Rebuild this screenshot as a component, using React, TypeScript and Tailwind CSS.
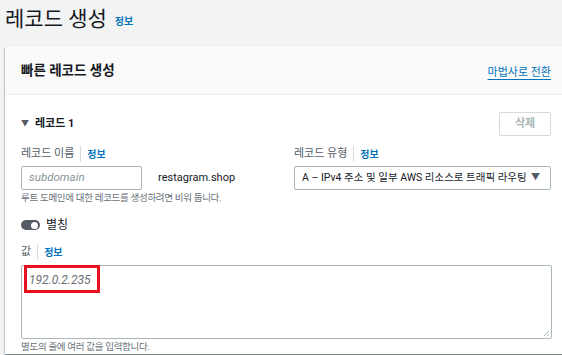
import React from 'react';

const font = { fontFamily: 'Roboto, "Noto Sans CJK KR", sans-serif' };

const Info = () => <span className="text-[10px] font-bold text-[#0073bb]">정보</span>;

const Label = ({ text }: { text: string }) => (
  <div className="flex h-[14px] items-center">
    <span className="text-[11px] leading-[14px] text-[#545b64]">{text}</span>
    <span className="mx-[6px] h-[16px] w-px bg-[#d5dbdb]" />
    <Info />
  </div>
);

const App = () => {
  return (
    <div className="h-[355px] w-[562px] overflow-hidden bg-[#f2f3f3] text-[#16191f]" style={font}>
      <div className="h-[47px] pl-[5px] pt-[7px]">
        <div className="flex h-[24px] items-center">
          <h1 className="text-[21px] leading-[24px] text-[#16191f]">레코드 생성</h1>
          <span className="ml-[8px] mt-[5px] flex">
            <Info />
          </span>
        </div>
      </div>

      <div className="ml-[5px] w-[562px] bg-white shadow-[0_1px_1px_0_rgba(0,28,36,0.3),1px_1px_1px_0_rgba(0,28,36,0.15),-1px_1px_1px_0_rgba(0,28,36,0.15)]">
        <div className="flex h-[48px] items-center justify-between border-b border-[#eaeded] bg-[#fafafa] px-[16px]">
          <h2 className="text-[13.5px] font-bold">빠른 레코드 생성</h2>
          <span className="mt-[4px] text-[11px] leading-[14px] text-[#0073bb] underline decoration-[#0073bb] underline-offset-[3px]">
            마법사로 전환
          </span>
        </div>

        <div className="px-[16px] pt-[17px]">
          <div className="flex h-[24px] items-center justify-between">
            <div className="flex items-center gap-[6px]">
              <span className="text-[8px] text-[#545b64]">▼</span>
              <span className="text-[11px] font-bold">레코드 1</span>
            </div>
            <button className="h-[24px] w-[52px] rounded-[2px] border border-[#d5dbdb] bg-white text-[11px] font-bold text-[#aab7b8]">
              삭제
            </button>
          </div>

          <div className="mt-[11px] grid grid-cols-2 gap-x-[16px]">
            <div>
              <Label text="레코드 이름" />
              <div className="mt-[5px] flex items-center">
                <div className="flex h-[24px] w-[121px] items-center rounded-[2px] border border-[#aab7b8] px-[7px] text-[11.5px] italic text-[#879596]">
                  subdomain
                </div>
                <span className="ml-[16px] text-[11px] text-[#16191f]">restagram.shop</span>
              </div>
              <div className="mt-[1px] whitespace-nowrap text-[9.5px] leading-[14px] tracking-[-0.3px] text-[#687078]">
                루트 도메인에 대한 레코드를 생성하려면 비워 둡니다.
              </div>
            </div>
            <div>
              <Label text="레코드 유형" />
              <div className="mt-[5px] flex h-[24px] items-center justify-between rounded-[2px] border border-[#aab7b8] pl-[7px] pr-[10px]">
                <span className="whitespace-nowrap text-[10.5px] text-[#16191f]">
                  A – IPv4 주소 및 일부 AWS 리소스로 트래픽 라우팅
                </span>
                <span className="text-[9px] text-[#545b64]">▼</span>
              </div>
            </div>
          </div>

          <div className="mt-[12px] flex h-[16px] items-center">
            <span className="relative h-[10px] w-[19px] rounded-full bg-[#545b64]">
              <span className="absolute right-[2px] top-[1.5px] h-[7px] w-[7px] rounded-full bg-white" />
            </span>
            <span className="ml-[6px] text-[12px]">별칭</span>
          </div>

          <div className="mt-[12px]">
            <Label text="값" />
          </div>

          <div className="relative mt-[6px] h-[74px] w-[531px] rounded-[2px] border border-[#aab7b8]">
            <span className="absolute left-[7px] top-[5px] text-[12px] italic text-[#687078]">192.0.2.235</span>
            <span className="absolute left-[2px] top-[-1px] h-[28px] w-[76px] border-[3px] border-[#e8101e]" />
            <svg className="absolute bottom-[1px] right-[1px]" width="8" height="8" viewBox="0 0 8 8">
              <path d="M7 2 L2 7 M7 5 L5 7" stroke="#aab7b8" strokeWidth="1" />
            </svg>
          </div>
          <div className="mt-[1px] whitespace-nowrap text-[9.5px] leading-[14px] tracking-[-0.3px] text-[#687078]">
            별도의 줄에 여러 값을 입력합니다.
          </div>
        </div>
      </div>
    </div>
  );
};

export default App;
